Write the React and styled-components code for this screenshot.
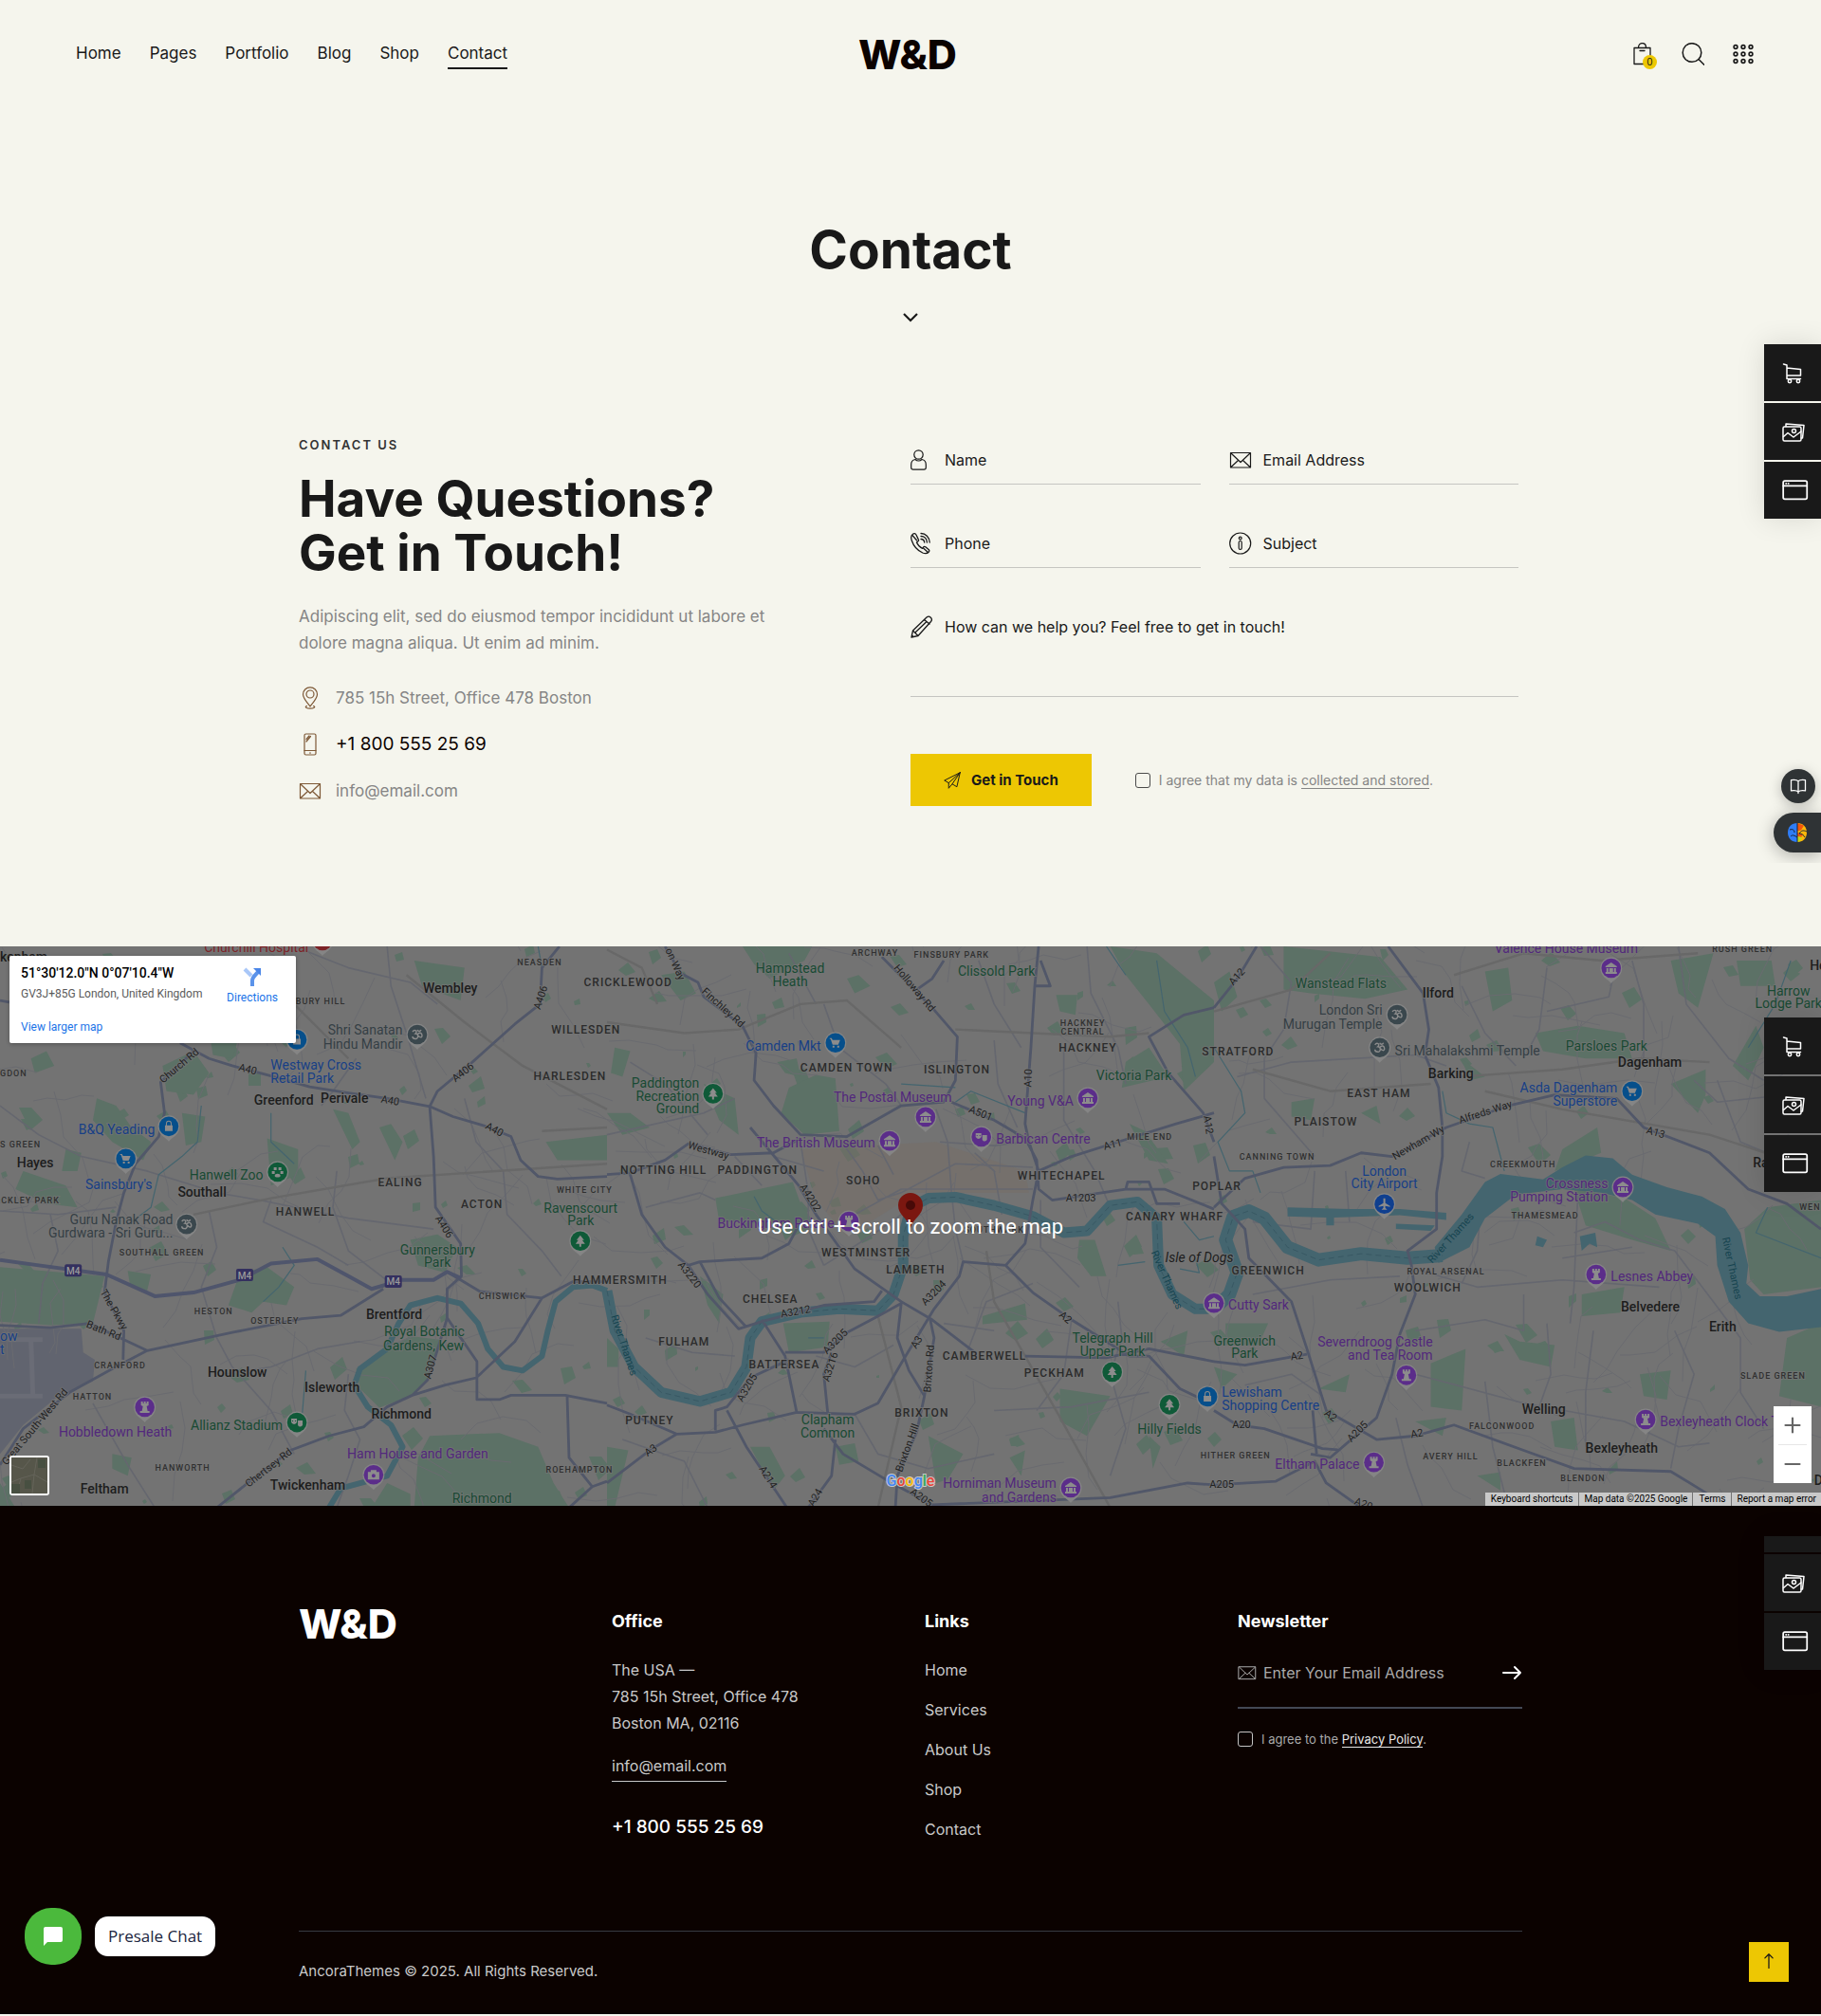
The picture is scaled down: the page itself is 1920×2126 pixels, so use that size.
import React from "react";
import styled, { createGlobalStyle, css } from "styled-components";

const GlobalStyle = createGlobalStyle`
  *, *::before, *::after { box-sizing: border-box; }
  body { margin: 0; background: #f5f5ed; color: #191919; font-family: Inter, "Open Sans", sans-serif; }
  h1, h2, h3, p, ul { margin: 0; padding: 0; }
  ul { list-style: none; }
  a { color: inherit; text-decoration: none; }
  button, input, textarea { font: inherit; color: inherit; margin: 0; padding: 0; border: 0; background: none; }
  button { cursor: pointer; }
  svg { display: block; flex: none; }
`;

/* ---------- icons ---------- */

const Stroke = ({ size = 24, w = 1.2, box = 24, children }) => (
  <svg width={size} height={size} viewBox={`0 0 ${box} ${box}`} fill="none" stroke="currentColor" strokeWidth={w} strokeLinecap="round" strokeLinejoin="round" aria-hidden="true">
    {children}
  </svg>
);
const BagIcon = () => (
  <Stroke><path d="M3 5.500h17v17H3zM7.500 5.300c0-6.300 8-6.300 8 0M9 8.500h5" strokeWidth="1.300" /></Stroke>
);
const SearchIcon = () => (
  <Stroke w={1.5}><circle cx="11" cy="10.500" r="9.800" /><path d="M18 17.500l6 6" /></Stroke>
);
const GridIcon = () => (
  <Stroke w={1.6}>
    {[4.5, 12, 19.5].map((y) => [4, 12, 20].map((x) => <circle key={`${x}-${y}`} cx={x} cy={y} r="1.900" />))}
  </Stroke>
);
const ChevronIcon = () => (
  <Stroke w={2.2}><path d="M5 8l7 7 7-7" strokeLinecap="butt" strokeLinejoin="miter" /></Stroke>
);
const PinIcon = () => (
  <Stroke><path d="M12 21C9 17 4.500 12.500 4.500 8.300a7.500 7.500 0 0 1 15 0C19.500 12.500 15 17 12 21z" /><circle cx="12" cy="8" r="4" /><path d="M8.500 20.500c-3 1 0 2.700 3.500 2.700s6.500-1.700 3.500-2.700" /></Stroke>
);
const MobileIcon = () => (
  <Stroke><rect x="6" y="1" width="12" height="22" rx="1.500" /><path d="M6 18.500h12M8 6.500L11 3M8 9l4.500-5.500M11.500 21h1" /></Stroke>
);
const MailIcon = ({ size }) => (
  <Stroke size={size}><path d="M1.500 4.500h21v15.500h-21zM2 5l10 9.500L22 5M2 19.500l7.500-7M22 19.500l-7.500-7" /></Stroke>
);
const UserIcon = () => (
  <Stroke><circle cx="8.500" cy="6.500" r="4.700" /><path d="M5 11.500c-3 .5-4.300 2.500-4.300 5.500v3c0 1.500.8 2.200 2.200 2.200h11.200c1.400 0 2.200-.7 2.200-2.200V17c0-3-1.300-5-4.300-5.500-2 2-5 2-7 0z" /></Stroke>
);
const PhoneIcon = () => (
  <Stroke w={1.3}><path d="M2.500 2.200C.7 3.500.3 6 1.300 9c2 6 6 10.500 11.500 13 2.500 1 5 .8 6.500-1 .8-1 .6-1.800-.2-2.500l-3.300-2.700c-.9-.6-1.700-.5-2.300.3l-1 1.300c-2.700-1.200-4.800-3.500-6-6.300l1.500-1.300c.7-.6.7-1.400.2-2.200L6 3C5 1.500 3.700 1.300 2.500 2.200zM2 3.500l4.500 5.200M14 17.500l4.500 4M11 1.500c5 0 9 4 9.200 9.500M11 4.500c3.700 0 6.200 2.700 6.400 6.500M11 7.500c2.300 0 3.500 1.500 3.700 3.500" /></Stroke>
);
const InfoIcon = () => (
  <Stroke><circle cx="11.700" cy="12" r="11" /><circle cx="11.700" cy="6.500" r="1.400" /><rect x="10.200" y="9.500" width="3" height="9" rx="1.400" /></Stroke>
);
const PencilIcon = () => (
  <Stroke w={1.3}><path d="M1 23l1.500-7L17 2c3-2.500 7 1.500 4.500 4.500L8 21.500zM2.500 16l5.500 5.500M14.500 4.500L20 9M5.500 17.500L17 6.500M1.500 21l1.500 1.500" /></Stroke>
);
const PlaneIcon = () => (
  <Stroke size={18} w={1.3}><path d="M23 1L1 12l6 3.500L23 1zM23 1l-4.500 20-6.500-4L23 1zM7 15.500V23l5-6" /></Stroke>
);
const ArrowIcon = ({ up }) => (
  <Stroke size={up ? 22 : 24} w={up ? 1.4 : 2}>
    {up ? <path d="M12 19V3M7.500 7.500L12 3l4.500 4.500" /> : <path d="M4 12h18M16 6l6 6-6 6" />}
  </Stroke>
);
const CartIcon = () => (
  <Stroke w={1.5}><path d="M1.500 3l3.500 1v14.500h14.500M5 7l14.500 1.500v6.500H5" /><circle cx="8" cy="21" r="1.700" /><circle cx="17" cy="21" r="1.700" /></Stroke>
);
const GalleryIcon = () => (
  <Stroke w={1.5}><rect x="1" y="7" width="19" height="15" rx="1.500" /><path d="M4 6.500V4L23 5.500l-1.500 13.500h-1.300M1.500 17.500l4.500-4 6 4.500 8-6" /><circle cx="12.500" cy="11.500" r="2" /></Stroke>
);
const WindowIcon = () => (
  <Stroke size={28} w={1.5}><rect x="1" y="3.500" width="21.500" height="16.500" rx="1.500" /><path d="M1 8h21.500M3.500 5.800h.2M5.600 5.800h.2" /></Stroke>
);
const BookIcon = () => (
  <Stroke size={18} w={1.7}><path d="M12 5C10 3 5 3 2 3.500v15c3-.5 8-.5 10 1.500 2-2 7-2 10-1.500v-15C19 3 14 3 12 5zM12 5v17" /></Stroke>
);
const BrainIcon = () => (
  <svg width="22" height="22" viewBox="0 0 22 22" aria-hidden="true">
    <path d="M11 1C5 1 1 5 1 11s4 10 10 10z" fill="#2f7df6" />
    <path d="M11 1c6 0 10 4 10 10s-4 10-10 10z" fill="#fbb80a" />
    <path d="M11 1l7 2.500-3 5-4 1zM11 11l6 2-2 3-4-1z" fill="#f0560c" />
    <path d="M11 15l5 1-2 4-3 1z" fill="#c4d916" />
    <path d="M11 1v20M3 8c3-1 5 0 5 3M4 15c2-2 4-1 7 1M13 12c2-3 4-4 8-2M13 12c3 0 5 2 6 4" stroke="#17243a" fill="none" />
  </svg>
);

/* ---------- shared pieces ---------- */

const Container = styled.div`
  max-width: 1290px;
  margin: 0 auto;
`;
const Logo = styled.a`
  font-size: 43px;
  line-height: 28px;
  font-weight: 800;
  color: ${(p) => (p.$light ? "#ffffff" : "#0b0200")};
`;
const Stack = styled.nav`
  position: absolute;
  right: 0;
  top: ${(p) => p.$top};
  display: flex;
  flex-direction: column;
  justify-content: flex-end;
  gap: 2px;
  z-index: 2;
  box-shadow: 0 0 30px rgba(0, 0, 0, 0.12);
  ${(p) => p.$clip && css`height: 141px; overflow: hidden;`}
`;
const StackLink = styled.a`
  display: flex;
  flex: none;
  align-items: center;
  width: 60px;
  height: 60px;
  padding-left: 19px;
  background: #191919;
  color: #ffffff;
`;
const SideStack = ({ top, clip }) => (
  <Stack $top={top} $clip={clip} aria-label="Quick links">
    <StackLink href="#buy" aria-label="Buy"><CartIcon /></StackLink>
    <StackLink href="#demos" aria-label="Demos"><GalleryIcon /></StackLink>
    <StackLink href="#site" aria-label="Site"><WindowIcon /></StackLink>
  </Stack>
);
const Check = styled.input.attrs({ type: "checkbox" })`
  appearance: none;
  flex: none;
  width: 16px;
  height: 16px;
  border: 1px solid ${(p) => (p.$light ? "#c4c4c4" : "#4a4a4a")};
  border-radius: 3px;
`;

/* ---------- header ---------- */

const Top = styled.div`
  position: relative;
  padding-bottom: 148px;
`;
const Header = styled.header`
  display: grid;
  grid-template-columns: 1fr auto 1fr;
  align-items: center;
  height: 114px;
  padding: 0 70px 0 64px;
`;
const Nav = styled.nav`
  display: flex;
  gap: 30px;
  padding-left: 16px;
`;
const NavLink = styled.a`
  padding: 5px 0 5px;
  border-bottom: 2px solid ${(p) => (p.$active ? "#191919" : "transparent")};
  font-size: 17px;
  line-height: 20px;
`;
const Tools = styled.div`
  display: flex;
  justify-content: flex-end;
  gap: 29px;
`;
const ToolButton = styled.button`
  position: relative;
  display: flex;
`;
const Badge = styled.span`
  position: absolute;
  right: -3px;
  bottom: -4px;
  width: 15px;
  height: 15px;
  border-radius: 50%;
  background: #edc703;
  font-size: 10px;
  line-height: 15px;
  text-align: center;
`;
const PageTitle = styled.h1`
  margin-top: 119px;
  font-size: 55px;
  line-height: 60px;
  font-weight: 700;
  text-align: center;
`;
const Down = styled.div`
  display: flex;
  justify-content: center;
  margin: 30px 0 112px;
`;

/* ---------- contact block ---------- */

const Columns = styled(Container)`
  display: grid;
  grid-template-columns: 1fr 1fr;
`;
const Eyebrow = styled.p`
  font-size: 13px;
  line-height: 20px;
  font-weight: 600;
  letter-spacing: 2px;
  color: #333333;
`;
const Heading = styled.h2`
  margin-top: 19px;
  font-size: 53px;
  line-height: 57px;
  font-weight: 700;
`;
const Lead = styled.p`
  max-width: 500px;
  margin-top: 24px;
  font-size: 17px;
  line-height: 28px;
  color: #858585;
`;
const ContactList = styled.ul`
  display: flex;
  flex-direction: column;
  gap: 21px;
  margin-top: 30px;
`;
const ContactItem = styled.li`
  display: flex;
  align-items: center;
  gap: 15px;
  font-size: ${(p) => (p.$strong ? "19px" : "17px")};
  line-height: 28px;
  color: ${(p) => (p.$strong ? "#0b0200" : "#858585")};
  svg { color: #7d5836; }
`;
const Form = styled.form`
  display: grid;
  grid-template-columns: 1fr 1fr;
  gap: 37px 30px;
  padding: 1px 4px 0 0;
  align-content: start;
`;
const Field = styled.label`
  display: flex;
  align-items: ${(p) => (p.$wide ? "flex-start" : "center")};
  grid-column: ${(p) => (p.$wide ? "1 / -1" : "auto")};
  gap: 12px;
  height: ${(p) => (p.$wide ? "99px" : "51px")};
  padding-top: ${(p) => (p.$wide ? "13px" : "0")};
  border-bottom: 1px solid #c5c5c1;
`;
const textBox = css`
  flex: 1;
  min-width: 0;
  outline: 0;
  font-size: 16px;
  line-height: 24px;
  &::placeholder { color: ${(p) => (p.$light ? "#aaaaaa" : "#191919")}; opacity: 1; }
`;
const TextInput = styled.input`${textBox}`;
const TextArea = styled.textarea`
  ${textBox}
  height: 80px;
  resize: none;
`;
const Submit = styled.div`
  grid-column: 1 / -1;
  display: flex;
  align-items: center;
  gap: 46px;
  margin-top: 23px;
`;
const SubmitButton = styled.button`
  display: flex;
  align-items: center;
  gap: 11px;
  height: 55px;
  padding: 0 35px;
  background: #edc703;
  font-size: 15px;
  font-weight: 700;
`;
const Agree = styled.label`
  display: flex;
  align-items: center;
  gap: 9px;
  font-size: ${(p) => (p.$light ? "13px" : "14px")};
  line-height: 20px;
  color: ${(p) => (p.$light ? "#aaaaaa" : "#858585")};
  a { border-bottom: 1px solid currentColor; ${(p) => p.$light && "color: #e8e8e8;"} }
`;
const Helpers = styled.div`
  position: absolute;
  right: 0;
  top: 790px;
  height: 120px;
  width: 80px;
  padding-top: 21px;
  display: flex;
  flex-direction: column;
  align-items: flex-end;
  gap: 10px;
  overflow: hidden;
`;
const Reader = styled.button`
  display: flex;
  align-items: center;
  justify-content: center;
  width: 36px;
  height: 36px;
  margin-right: 6px;
  border-radius: 50%;
  background: #2f3335;
  color: #ffffff;
  box-shadow: 0 3px 14px rgba(0, 0, 0, 0.25);
`;
const Assistant = styled.button`
  display: flex;
  align-items: center;
  width: 50px;
  height: 42px;
  padding-left: 14px;
  border-radius: 21px 0 0 21px;
  background: #2f3335;
  box-shadow: 0 3px 18px rgba(0, 0, 0, 0.3);
`;

/* ---------- map ---------- */

const MapSection = styled.section`
  position: relative;
  height: 590px;
  overflow: hidden;
  background: #737373;
  font-family: Roboto, sans-serif;
`;
const MapDrawing = styled.svg`
  width: 100%;
  height: 100%;
`;
const MapHint = styled.p`
  position: absolute;
  inset: 0;
  display: flex;
  align-items: center;
  justify-content: center;
  font-size: 22px;
  color: #ffffff;
`;
const MapCard = styled.div`
  position: absolute;
  left: 10px;
  top: 10px;
  display: flex;
  justify-content: space-between;
  width: 302px;
  height: 92px;
  padding: 8px 19px 0 12px;
  border-radius: 2px;
  background: #ffffff;
  box-shadow: 0 1px 4px rgba(0, 0, 0, 0.3);
  font-size: 12px;
  line-height: 16px;
  a { color: #1a73e8; }
`;
const CardTitle = styled.p`
  font-size: 14px;
  line-height: 20px;
  font-weight: 500;
  color: #000000;
`;
const CardAddress = styled.p`
  margin: 4px 0 19px;
  color: #5b5b5b;
`;
const Directions = styled.a`
  display: flex;
  flex-direction: column;
  align-items: center;
  gap: 3px;
  padding-top: 3px;
`;
const Satellite = styled.button`
  position: absolute;
  left: 10px;
  bottom: 11px;
  display: flex;
  width: 42px;
  height: 42px;
  border: 2px solid #ffffff;
  border-radius: 3px;
  overflow: hidden;
`;
const Zoom = styled.div`
  position: absolute;
  right: 10px;
  bottom: 24px;
  display: flex;
  flex-direction: column;
  width: 40px;
  padding: 0 5px;
  background: #ffffff;
  color: #666666;
`;
const ZoomButton = styled.button`
  display: flex;
  align-items: center;
  justify-content: center;
  height: 40px;
  & + & { border-top: 1px solid #e6e6e6; height: 41px; }
`;
const Credits = styled.div`
  position: absolute;
  right: 0;
  bottom: 0;
  display: flex;
  gap: 1px;
  font-size: 10px;
  line-height: 14px;
  color: #000000;
`;
const creditBox = css`
  padding: 0 5px 0 6px;
  background: #c9c9c9;
`;
const Credit = styled.a`${creditBox}`;
const CreditText = styled.span`${creditBox}`;

/* The map is charted in three sheets of 1568 x 1568 units, side by side. */
const SHEET = 1568;
const at = (sheet, x, y) => [sheet * 640 + (x * 640) / SHEET, (y * 600) / SHEET - 8];

const WATER = "#44656f";
const sheets = [
  {
    parks: "M920 1185L1000 1130 1060 1095 1135 1105 1110 1210 1060 1260 980 1292 930 1240zM1080 1430L1110 1370 1290 1362 1390 1400 1430 1500 1470 1568 1070 1568zM0 905L270 930 240 1060 130 1065 0 1055zM330 915L390 925 380 970 335 950zM620 920L690 905 760 960 740 1010 680 1000 650 1030 590 1010zM1060 830L1130 815 1180 850 1150 920 1080 900zM420 350L500 310 540 370 500 430 430 420zM250 440L300 460 340 520 390 560 370 610 290 560 240 500zM470 480L530 490 520 560 480 570zM170 580L210 590 200 640 160 640zM690 550L770 580 770 650 700 680zM1070 60L1200 80 1190 170 1090 130zM80 330L120 310 140 350 90 370zM1410 560L1568 540 1568 610 1440 610zM540 250L620 260 600 330 550 320zM0 1170L20 1180 0 1250zM290 1420L340 1430 330 1480 290 1460zM60 640L170 680 200 740 120 730 40 690zM860 470L900 480 930 560 910 580zM980 520L1010 510 1040 560 1020 610zM0 1500L40 1568 0 1568zM1000 1500L1060 1530 1060 1568 960 1568zM700 260L760 250 740 300z",
    river: "M850 1568L880 1515 1000 1480 1040 1400 1010 1340 950 1290 915 1230 930 1185 1000 1130 1030 1060 1060 1010 1130 990 1190 1005 1235 1060 1260 1130 1300 1180 1350 1190 1400 1150 1415 1080 1435 1000 1480 960 1530 955 1568 970",
    width: 6,
    streams: "M520 460L510 560 470 600 410 650 390 740 340 780M730 850L760 900 720 960 680 1000M700 480L700 560 760 620M1390 21L1400 80M790 1190L780 1320",
    roads: "M465 287L540 330 600 350 700 378 800 408 900 425 1000 440 1110 462 1170 490 1250 515 1320 545 1345 610 1390 655 1440 662 1568 655M500 310L415 395 425 480 410 545 350 620 320 700 300 780 280 890 270 975 320 1080 318 1160M1445 21L1400 80 1395 180 1330 235 1220 340 1130 420 1110 462 1120 600 1125 740 1190 840 1192 930 1155 965 1155 1045 1125 1150 1105 1215 1065 1258M1568 945L1480 945 1400 990 1330 1110 1230 1210 1150 1230 1065 1258 1000 1290 940 1345 850 1370 750 1410 640 1500 560 1568M0 1450L60 1350 180 1250 290 1185 380 1135 600 1085 780 1047 880 1038 990 965M0 1065L130 1072 230 1060 320 1105 380 1135M1155 1045L1232 1165 1232 1270 1290 1270 1320 1258 1460 1258 1568 1280M1465 1258L1470 1430 1530 1510M1470 1568L1530 1510 1568 1495M1155 918L1240 972 1400 990M0 170L24 175",
    motorway: "M0 885L100 900 275 925 400 985 500 975 620 940 700 895 820 883 900 930 960 965 1040 940 1120 940 1155 918 1190 935",
    rails: "M1050 100L1200 230 1350 350 1568 470M1400 530L1568 520M500 760L700 715 1000 660 1568 620M640 60L760 180 900 330",
    minor: "M0 460L100 540 210 600 380 640 560 700 670 720 900 770 1120 800M760 21L900 80 1060 120 1130 180M540 750L560 850 520 960 560 1100 600 1180 700 1300 760 1420M870 640L860 740 900 860 1010 950M100 1060L110 950 150 860 130 760M700 720L680 780 820 850 900 900M1200 440L1230 560 1300 640 1310 760 1400 860 1450 930M1000 21L1010 130 1050 260 1100 440M240 1280L330 1450 400 1568M580 1200L700 1180 820 1130 930 1110M920 330L860 420 830 460M0 750L150 760 300 740M900 1200L890 1300 930 1380 900 1480 870 1568",
  },
  {
    parks: "M450 480L470 410 540 375 590 385 600 530 510 540zM280 715L480 670 500 730 540 790 480 820 370 780 290 780zM455 1060L575 1055 570 1125 470 1140zM350 21L530 21 510 60 420 110 380 70zM1340 340L1400 300 1450 380 1330 410zM1300 21L1420 40 1568 170 1568 340 1490 420 1480 290 1400 180 1340 100zM0 1400L55 1410 20 1568 0 1568zM830 1370L920 1420 880 1490 850 1500zM970 1040L1080 1005 1085 1050 970 1062zM0 480L60 480 110 520 40 540zM250 400L330 440 340 540 290 500zM1160 155L1215 155 1210 210 1170 200zM620 110L650 100 680 130 640 150zM1220 830L1260 830 1290 930 1250 930 1215 880zM1350 510L1390 530 1450 620 1400 610zM1170 1240L1300 1260 1240 1370 1170 1330zM370 1400L420 1400 460 1480 430 1520zM0 1100L30 1130 30 1180 0 1180zM590 1400L640 1390 650 1440 600 1450zM240 930L300 980 290 1060 260 1010zM140 100L200 90 230 150 190 170zM20 300L60 310 40 380 10 370zM1430 1110L1500 1080 1490 1150zM440 340L490 330 500 380 460 370zM1040 1430L1080 1410 1070 1480zM1400 1370L1430 1400 1410 1460z",
    river: "M0 970L20 1080 70 1180 140 1250 240 1275 320 1250 360 1180 370 1100 400 1055 500 1030 600 1020 700 1025 740 980 765 900 765 820 785 740 830 715 900 712 1000 735 1100 765 1180 810 1240 805 1300 735 1370 725 1420 770 1425 900 1460 980 1520 1020 1568 1020",
    width: 11,
    streams: "M380 710L400 750 450 790M760 400L900 410M900 450L940 420 1080 480M1420 60L1440 200 1500 300 1520 380M1290 21L1340 100M1490 780L1530 830 1568 820M1320 900L1390 890M1480 910L1530 920 1520 880M520 1100L560 1100",
    roads: "M150 21L190 95 235 120 250 160 350 240 385 315 380 390 430 460 500 540 620 545 760 460 870 450 900 390 905 270 840 190 710 50M370 520L495 680 540 760 600 850 640 910 760 1000 840 1050 950 1140M0 650L60 645 150 610 210 565 320 595 430 590 500 550M890 450L1000 500 1080 550 1110 610 1115 690 1150 720 1340 690 1440 690 1568 745M1115 21L1105 130 1095 300 1080 510 1090 560 1115 640 1100 720 1080 840 1030 900 920 890 910 930 845 1020 760 1170 700 1280 640 1310 490 1305 350 1340 280 1360 180 1365 60 1310 0 1285M1115 640L1200 600 1320 560 1470 510 1568 480M1568 190L1490 210 1400 270 1450 370 1540 480 1568 560M1030 900L1100 975 1200 1050 1350 1150 1400 1150 1480 1240 1568 1285M1080 1150L1290 1155 1400 1130 1568 1165M60 650L90 760 150 850 210 900 240 890 400 880 470 840 500 780M210 900L260 980 340 1075 400 1055 560 1010 690 1000 710 970M240 890L290 990 360 1070M400 1050L460 1150 490 1305M460 1140L560 1140 620 1085 700 1040 760 1005 750 1100 780 1190 820 1260 800 1360 750 1480 745 1568M570 1305L560 1200 580 1140M0 1500L110 1410 180 1365M310 1300L360 1400 465 1568M280 1355L280 1300 310 1290 370 1210 470 1160M590 1380L580 1480 520 1568M560 1350L610 1420 720 1490 840 1560 1300 1540 1500 1500 1568 1505M835 1050L845 1100 820 1260M870 60L840 110 800 140M1120 60L1145 130 1105 130M1340 690L1345 670 1400 670 1420 730 1480 730",
    rails: "M0 230L200 260 340 250 500 180 620 170 760 300M0 30L90 80 130 180M900 250L1100 260 1300 270 1400 260M980 860L1000 1000 1160 1300 1300 1568M700 1040L760 1290 700 1568",
    minor: "M0 540L250 480 330 440M560 180L600 300 720 400 760 460M500 560L520 700 520 800 560 900M600 550L660 640 700 720 760 700 900 620 1100 630M850 470L880 560 890 700 900 800 920 890M950 590L1000 640 1020 760M700 570L740 650M640 760L760 690 960 690 1100 690M560 900L680 820 760 760M330 600L400 680M100 740L240 700 280 720M860 560L1000 570 1080 560M1180 300L1180 500 1260 640 1300 740M1000 280L1010 400 1060 520M930 1140L980 1000 1100 950M1200 1050L1180 1200 1110 1300M640 1310L700 1420 830 1460 1000 1420M1320 1000L1330 1100 1300 1200 1340 1350 1300 1480M100 1100L220 1140 330 1150M40 1380L200 1440 260 1568M1240 21L1250 150 1320 300 1340 400M960 60L1000 180 1070 300M430 600L560 640M470 40L540 180M1120 720L1120 850 1220 960M870 1060L1000 1080M1000 1300L1200 1290 1400 1250M260 540L150 400 60 340M540 1150L640 1180 740 1120",
  },
  {
    parks: "M180 21L430 50 500 140 390 165 250 150 180 140zM1370 800L1430 740 1568 720 1568 960 1420 980 1385 940zM1480 1100L1568 1060 1568 1290 1460 1260zM950 980L1060 960 1050 1030 950 1040zM560 1170L650 1130 640 1300 560 1290zM930 690L1060 715 1140 770 1180 860 1080 830 960 790zM1180 60L1290 40 1250 190 1200 150zM30 1060L140 1060 115 1120 30 1120zM870 1330L930 1320 940 1410 880 1400zM1180 400L1270 360 1270 430 1250 480zM900 580L990 520 1000 590 930 620 880 640zM1350 60L1440 60 1450 130 1360 130zM750 1090L790 1110 880 1120 870 1180 790 1160zM0 1180L60 1200 20 1240zM200 450L260 440 250 500 200 490zM700 90L760 80 770 170 720 200zM640 330L700 380 660 390zM1400 240L1420 300 1380 390 1340 350zM1100 1200L1180 1190 1170 1270 1110 1260zM520 1330L600 1320 590 1370zM0 120L40 90 60 160 20 200zM380 480L420 460 430 510zM830 260L940 240 1060 260 1080 330 960 330 850 310zM680 1480L740 1470 740 1520zM270 1240L350 1200 340 1250z",
    river: "M0 1020L40 980 60 920 30 830 50 765 90 750 130 770 190 850 270 885 380 868 500 880 590 873",
    width: 14,
    estuary: "M570 850L640 760 700 670 740 648 850 663 900 630 960 597 1030 605 1080 650 1170 685 1260 710 1320 745 1360 810 1380 900 1375 950 1410 985 1480 985 1568 965 1568 1070 1460 1083 1380 1060 1330 1000 1300 900 1295 820 1250 785 1140 760 1080 720 1000 700 900 690 780 705 700 770 660 850 580 893zM190 740L350 745 480 745 600 755 600 775 480 762 310 768 310 790 290 790 290 768 190 765zM470 785L570 790 560 805 470 800zM945 820L985 810 990 850 970 840 950 860zM835 820L860 830 850 850 830 845z",
    streams: "M590 420L600 480 660 510 720 520 750 640M0 300L70 420 80 480 10 560 40 640 100 640 120 700M1430 740L1400 810 1568 880M1490 60L1450 180 1380 300",
    roads: "M110 21L60 110 0 190M450 21L540 150 555 250 545 320 580 410 590 520 590 600 575 700 575 800 500 860 510 900 520 980 480 1090 460 1200 420 1320 300 1430 250 1420M0 740L80 660 180 630 300 625 380 590 460 600 600 520 760 460 880 430 1040 440 1110 520 1280 590 1380 690 1480 730 1568 800M0 600L20 730 80 800 90 880 200 1000 240 1130 290 1300 420 1380 520 1370 620 1340 800 1410 930 1460 1180 1468 1260 1520 1330 1568M0 1300L60 1340 130 1350 280 1405 320 1408M0 1505L160 1495 260 1440 290 1500 380 1568M255 1300L265 1420M0 1165L80 1175 240 1145",
    rails: "M620 100L800 40 1000 60 1250 40M640 380L900 360 1100 330 1280 340M700 420L900 470 1280 540 1568 640M100 360L300 420 560 400M0 200L200 140 300 40",
    minor: "M930 810L1010 780 1100 830 1190 860 1290 1000 1360 1100 1360 1250 1420 1350M640 130L700 260 780 350M860 80L840 250 800 330M1110 330L1110 180 1080 60M1200 21L1220 180 1330 330 1420 390M600 350L520 320 200 340 60 380M120 21L200 120 180 250 130 330 130 440 260 600M260 640L250 800 100 780M340 640L350 780M690 720L680 860 640 950M940 700L930 960 920 1060M100 980L300 940 480 930M520 910L680 960 900 940 1150 960M520 1200L800 1280 1060 1330 1200 1400 1280 1390M860 1060L870 1200 840 1290M800 980L800 1080 700 1050 520 1080M700 1220L720 1400 760 1568M1190 1080L1240 1200 1200 1350 1180 1460M470 1320L500 1450 540 1568M1040 60L1020 160 860 200M1240 390L1300 450 1568 420M80 1230L200 1200 280 1260M660 560L640 640 700 660M900 880L1080 850M1300 390L1360 560 1450 600M980 1080L960 1250 960 1400",
  },
];

/* Side streets: a fixed scatter of short bent lines over the whole chart. */
const sideStreets = (() => {
  let seed = 7;
  const next = () => ((seed = (seed * 16807) % 2147483647) / 2147483647);
  let d = "";
  for (let i = 0; i < 300; i += 1) {
    let x = next() * 1920;
    let y = next() * 590;
    let a = next() * 6.28;
    d += `M${x.toFixed(0)} ${y.toFixed(0)}`;
    for (let k = 0; k < 4; k += 1) {
      a += (next() - 0.5) * 1.1;
      x += Math.cos(a) * (10 + next() * 22);
      y += Math.sin(a) * (10 + next() * 22);
      d += `L${x.toFixed(0)} ${y.toFixed(0)}`;
    }
  }
  return d;
})();
const greens = (() => {
  let seed = 91;
  const next = () => ((seed = (seed * 16807) % 2147483647) / 2147483647);
  let d = "";
  for (let i = 0; i < 230; i += 1) {
    const x = next() * 1920;
    const y = next() * 590;
    const s = 3 + next() * 10;
    d += `M${x.toFixed(0)} ${y.toFixed(0)}l${s.toFixed(0)} ${(-s * next()).toFixed(0)} ${(s * next()).toFixed(0)} ${s.toFixed(0)} ${(-s).toFixed(0)} ${(s * next()).toFixed(0)}z`;
  }
  return d;
})();

const kinds = {
  town: { size: 14, weight: 500, fill: "#1d1d1d" },
  area: { size: 12, weight: 500, fill: "#2b2b2b", spacing: 1 },
  small: { size: 9, weight: 500, fill: "#303030", spacing: 1 },
  park: { size: 14, weight: 400, fill: "#184a33" },
  sight: { size: 14, weight: 400, fill: "#52287c" },
  shop: { size: 14, weight: 400, fill: "#173f86" },
  faith: { size: 14, weight: 400, fill: "#353f45" },
  health: { size: 14, weight: 400, fill: "#7c2327" },
  road: { size: 11, weight: 400, fill: "#222222" },
  water: { size: 11, weight: 400, fill: "#17444f" },
  isle: { size: 14, weight: 400, fill: "#1d1d1d", italic: true },
};

/* sheet, x, y of the centre line, text, kind, anchor, turn */
const labels = [
  [0, 0, 50, "kenham", "town", "start"],
  [0, 662, 24, "Churchill Hospital", "health"],
  [0, 1394, 66, "NEASDEN", "small"],
  [0, 1163, 136, "Wembley", "town"],
  [0, 764, 173, "BURY HILL", "small", "start"],
  [0, 1040, 252, "Shri Sanatan", "faith", "end"],
  [0, 1040, 289, "Hindu Mandir", "faith", "end"],
  [0, 699, 347, "Westway Cross", "shop", "start"],
  [0, 699, 383, "Retail Park", "shop", "start"],
  [0, 733, 445, "Greenford", "town"],
  [0, 890, 440, "Perivale", "town"],
  [0, 1424, 251, "WILLESDEN", "area", "start"],
  [0, 1378, 380, "HARLESDEN", "area", "start"],
  [0, 0, 372, "GDON", "small", "start"],
  [0, 400, 524, "B&Q Yeading", "shop", "end"],
  [0, 0, 566, "S GREEN", "small", "start"],
  [0, 91, 618, "Hayes", "town"],
  [0, 307, 676, "Sainsbury's", "shop"],
  [0, 154, 720, "OCKLEY PARK", "small", "end"],
  [0, 680, 650, "Hanwell Zoo", "park", "end"],
  [0, 522, 698, "Southall", "town"],
  [0, 1034, 672, "EALING", "area"],
  [0, 789, 753, "HANWELL", "area"],
  [0, 1245, 732, "ACTON", "area"],
  [0, 1438, 693, "WHITE CITY", "small", "start"],
  [0, 1500, 741, "Ravenscourt", "park"],
  [0, 1500, 777, "Park", "park"],
  [0, 447, 774, "Guru Nanak Road", "faith", "end"],
  [0, 447, 811, "Gurdwara - Sri Guru...", "faith", "end"],
  [0, 418, 866, "SOUTHALL GREEN", "small"],
  [0, 1130, 856, "Gunnersbury", "park"],
  [0, 1130, 892, "Park", "park"],
  [0, 1298, 986, "CHISWICK", "small"],
  [0, 552, 1028, "HESTON", "small"],
  [0, 710, 1054, "OSTERLEY", "small"],
  [0, 1018, 1035, "Brentford", "town"],
  [0, 1096, 1083, "Royal Botanic", "park"],
  [0, 1094, 1120, "Gardens, Kew", "park"],
  [0, 0, 1094, "ow", "shop", "start"],
  [0, 0, 1131, "t", "shop", "start"],
  [0, 310, 1177, "CRANFORD", "small"],
  [0, 613, 1195, "Hounslow", "town"],
  [0, 858, 1237, "Isleworth", "town"],
  [0, 239, 1261, "HATTON", "small"],
  [0, 1037, 1308, "Richmond", "town"],
  [0, 298, 1360, "Hobbledown Heath", "sight"],
  [0, 730, 1340, "Allianz Stadium", "park", "end"],
  [0, 1079, 1420, "Ham House and Garden", "sight"],
  [0, 472, 1459, "HANWORTH", "small"],
  [0, 270, 1517, "Feltham", "town"],
  [0, 795, 1504, "Twickenham", "town"],
  [0, 1410, 1464, "ROEHAMPTON", "small", "start"],
  [0, 1245, 1543, "Richmond", "park"],
  [0, 463, 350, "Church Rd", "road", "middle", -40],
  [0, 640, 360, "A40", "road", "middle", 14],
  [0, 1008, 446, "A40", "road", "middle", 10],
  [0, 1277, 526, "A40", "road", "middle", 28],
  [0, 1397, 162, "A406", "road", "middle", -72],
  [0, 1196, 368, "A406", "road", "middle", -38],
  [0, 1147, 794, "A406", "road", "middle", 58],
  [0, 294, 1022, "The Pkwy", "road", "middle", 60],
  [0, 268, 1080, "Bath Rd", "road", "middle", 22],
  [0, 90, 1345, "Great South-West Rd", "road", "middle", -50],
  [0, 694, 1458, "Chertsey Rd", "road", "middle", -38],
  [0, 1112, 1180, "A307", "road", "middle", -75],
  [1, -60, 121, "CRICKLEWOOD", "area", "start"],
  [1, 473, 80, "Hampstead", "park"],
  [1, 473, 117, "Heath", "park"],
  [1, 692, 40, "ARCHWAY", "small"],
  [1, 890, 45, "FINSBURY PARK", "small"],
  [1, 1006, 88, "Clissold Park", "park"],
  [1, 1229, 233, "HACKNEY", "small"],
  [1, 1229, 257, "CENTRAL", "small"],
  [1, 1242, 301, "HACKNEY", "area"],
  [1, 553, 294, "Camden Mkt", "shop", "end"],
  [1, 619, 356, "CAMDEN TOWN", "area"],
  [1, 904, 361, "ISLINGTON", "area"],
  [1, 1361, 376, "Victoria Park", "park"],
  [1, 1537, 312, "STRATFORD", "area", "start"],
  [1, 238, 396, "Paddington", "park", "end"],
  [1, 238, 433, "Recreation", "park", "end"],
  [1, 238, 469, "Ground", "park", "end"],
  [1, 738, 436, "The Postal Museum", "sight"],
  [1, 1205, 446, "Young V&A", "sight", "end"],
  [1, 693, 563, "The British Museum", "sight", "end"],
  [1, 1005, 552, "Barbican Centre", "sight", "start"],
  [1, 1402, 547, "MILE END", "small"],
  [1, 146, 638, "NOTTING HILL", "area"],
  [1, 389, 638, "PADDINGTON", "area"],
  [1, 662, 667, "SOHO", "area"],
  [1, 1174, 654, "WHITECHAPEL", "area"],
  [1, 1512, 683, "POPLAR", "area", "start"],
  [1, 1340, 767, "CANARY WHARF", "area", "start"],
  [1, 587, 785, "Buckingham Palace", "sight", "end"],
  [1, 1000, 802, "SOUTHWARK", "small"],
  [1, 669, 865, "WESTMINSTER", "area"],
  [1, 797, 912, "LAMBETH", "area"],
  [1, -88, 941, "HAMMERSMITH", "area", "start"],
  [1, 422, 994, "CHELSEA", "area"],
  [1, 199, 1111, "FULHAM", "area"],
  [1, 458, 1174, "BATTERSEA", "area"],
  [1, 975, 1150, "CAMBERWELL", "area"],
  [1, 1156, 1197, "PECKHAM", "area"],
  [1, 1306, 1101, "Telegraph Hill", "park"],
  [1, 1306, 1138, "Upper Park", "park"],
  [1, 813, 1307, "BRIXTON", "area"],
  [1, 110, 1328, "PUTNEY", "area"],
  [1, 570, 1326, "Clapham", "park"],
  [1, 570, 1362, "Common", "park"],
  [1, 1453, 1352, "Hilly Fields", "park"],
  [1, 1161, 1501, "Horniman Museum", "sight", "end"],
  [1, 1161, 1538, "and Gardens", "sight", "end"],
  [1, 1533, 1425, "HITHER GREEN", "small", "start"],
  [1, 176, 70, "on Way", "road", "middle", 66],
  [1, 300, 190, "Finchley Rd", "road", "middle", 42],
  [1, 794, 136, "Holloway Rd", "road", "middle", 50],
  [1, 1088, 384, "A10", "road", "middle", -88],
  [1, 965, 481, "A501", "road", "middle", 22],
  [1, 262, 584, "Westway", "road", "middle", 16],
  [1, 1306, 567, "A11", "road", "middle", -14],
  [1, 1224, 716, "A1203", "road"],
  [1, 1553, 513, "A12", "road", "middle", 82],
  [1, 525, 714, "A4202", "road", "middle", 58],
  [1, 213, 926, "A3220", "road", "middle", 52],
  [1, 844, 976, "A3204", "road", "middle", -45],
  [1, 487, 1028, "A3212", "road", "middle", -10],
  [1, 590, 1110, "A3205", "road", "middle", -45],
  [1, 577, 1180, "A3216", "road", "middle", -72],
  [1, 362, 1237, "A3205", "road", "middle", -60],
  [1, 800, 1112, "A3", "road", "middle", -58],
  [1, 832, 1185, "Brixton Rd", "road", "middle", -86],
  [1, 776, 1403, "Brixton Hill", "road", "middle", -70],
  [1, 1184, 1044, "A2", "road", "middle", 40],
  [1, 113, 1410, "A3", "road", "middle", -35],
  [1, 416, 1484, "A214", "road", "middle", 58],
  [1, 538, 1540, "A24", "road", "middle", -60],
  [1, 812, 1540, "A205", "road", "middle", 36],
  [1, 1442, 878, "Isle of Dogs", "isle", "start"],
  [1, 44, 1120, "River Thames", "water", "middle", 72],
  [1, 1446, 940, "River Thames", "water", "middle", 66],
  [2, 328, 122, "Wanstead Flats", "park"],
  [2, 579, 148, "Ilford", "town"],
  [2, 910, 26, "Valence House Museum", "sight"],
  [2, 1365, 30, "RUSH GREEN", "small"],
  [2, 1539, 72, "Ho", "town", "start"],
  [2, 1484, 143, "Harrow", "park"],
  [2, 1484, 179, "Lodge Park", "park"],
  [2, 435, 197, "London Sri", "faith", "end"],
  [2, 435, 234, "Murugan Temple", "faith", "end"],
  [2, 467, 308, "Sri Mahalakshmi Temple", "faith", "start"],
  [2, 1014, 296, "Parsloes Park", "park"],
  [2, 1126, 341, "Dagenham", "town"],
  [2, 612, 372, "Barking", "town"],
  [2, 1042, 409, "Asda Dagenham", "shop", "end"],
  [2, 1042, 446, "Superstore", "shop", "end"],
  [2, 426, 427, "EAST HAM", "area"],
  [2, 289, 505, "PLAISTOW", "area"],
  [2, 163, 602, "CANNING TOWN", "small"],
  [2, 440, 639, "London", "shop"],
  [2, 440, 675, "City Airport", "shop"],
  [2, 798, 623, "CREEKMOUTH", "small"],
  [2, 1018, 673, "Crossness", "sight", "end"],
  [2, 1018, 710, "Pumping Station", "sight", "end"],
  [2, 855, 764, "THAMESMEAD", "small"],
  [2, 1392, 618, "Ra", "town", "start"],
  [2, 1512, 740, "WEN", "small", "start"],
  [2, 140, 915, "GREENWICH", "area"],
  [2, 599, 916, "ROYAL ARSENAL", "small"],
  [2, 552, 962, "WOOLWICH", "area"],
  [2, 1025, 931, "Lesnes Abbey", "sight", "start"],
  [2, 37, 1010, "Cutty Sark", "sight", "start"],
  [2, 1127, 1015, "Belvedere", "town"],
  [2, 1314, 1070, "Erith", "town"],
  [2, 79, 1107, "Greenwich", "park"],
  [2, 79, 1143, "Park", "park"],
  [2, 565, 1110, "Severndroog Castle", "sight", "end"],
  [2, 565, 1146, "and Tea Room", "sight", "end"],
  [2, 1444, 1206, "SLADE GREEN", "small"],
  [2, 20, 1250, "Lewisham", "shop", "start"],
  [2, 20, 1287, "Shopping Centre", "shop", "start"],
  [2, 852, 1295, "Welling", "town"],
  [2, 744, 1342, "FALCONWOOD", "small"],
  [2, 1152, 1331, "Bexleyheath Clock T", "sight", "start"],
  [2, 1053, 1404, "Bexleyheath", "town"],
  [2, 376, 1449, "Eltham Palace", "sight", "end"],
  [2, 611, 1428, "AVERY HILL", "small"],
  [2, 795, 1446, "BLACKFEN", "small"],
  [2, 953, 1486, "BLENDON", "small"],
  [2, 1550, 1492, "D", "town", "start"],
  [2, 59, 105, "A12", "road", "middle", -48],
  [2, 701, 478, "Alfreds Way", "road", "middle", -18],
  [2, 528, 562, "Newham Wy", "road", "middle", -30],
  [2, 1141, 534, "A13", "road", "middle", 16],
  [2, 214, 1150, "A2", "road", "middle", -8],
  [2, 301, 1314, "A2", "road", "middle", 36],
  [2, 71, 1340, "A20", "road"],
  [2, 524, 1364, "A2", "road", "middle", -10],
  [2, 371, 1358, "A205", "road", "middle", -45],
  [2, 20, 1505, "A205", "road"],
  [2, 386, 1558, "A20", "road", "middle", 20],
  [2, 612, 825, "River Thames", "water", "middle", -48],
  [2, 1338, 908, "River Thames", "water", "middle", 78],
];

const pinTint = { park: "#0f5a38", sight: "#5b2d8a", shop: "#064f8b", faith: "#3a474d", health: "#7c2327", air: "#0f3f8f" };
const glyphs = {
  tree: "M0-6L4-1H2L5 3H1V6H-1V3H-5L-2-1H-4z",
  museum: "M-6-2L0-6 6-2V-1H-6zM-5 0H-3V4H-5zM3 0H5V4H3zM-2 0H2V4H-2zM-6 4H6V6H-6z",
  tower: "M-4-6H-2V-4H-1V-6H1V-4H2V-6H4V-2L2-1 3 4H5V6H-5V4H-3L-2-1-4-2z",
  bag: "M-4-1H-3V-3A3 3 0 0 1 3-3V-1H4V5H-4zM-2-1H2V-3A2 2 0 0 0-2-3z",
  cart: "M-6-5H-4L-3-3H5L3 2H-3L-5-4H-6zM-3 3H-1V5H-3zM2 3H4V5H2z",
  paw: "M-3 4C-3 1 3 1 3 4 3 6-3 6-3 4zM-6-1h3v3h-3zM3-1h3v3H3zM-4-5h3v3h-3zM1-5h3v3H1z",
  camera: "M-6-3H-3V-5H3V-3H6V5H-6zM0-1A2 2 0 1 0 0 3 2 2 0 1 0 0-1z",
  masks: "M-6-4H0V0Q-3 4-6 0zM1-2H6V3Q3 6 1 3zM-5-2H-4V-1H-5zM-2-2H-1V-1H-2z",
  plane: "M-1-6H1V-1L6 2V3L1 2V4L3 6H-3L-1 4V2L-6 3V2L-1-1z",
};
const pins = [
  [0, 833, 5, "health", "museum"], [0, 767, 278, "shop", "bag"], [0, 1078, 264, "faith", "om"],
  [0, 436, 517, "shop", "bag"], [0, 325, 606, "shop", "cart"], [0, 717, 643, "park", "paw"],
  [0, 482, 787, "faith", "om"], [0, 1499, 833, "park", "tree"], [0, 374, 1291, "sight", "tower"],
  [0, 767, 1333, "park", "masks"], [0, 965, 1477, "sight", "camera"],
  [1, 590, 287, "shop", "cart"], [1, 274, 427, "park", "tree"], [1, 823, 491, "sight", "museum"],
  [1, 1242, 439, "sight", "museum"], [1, 730, 557, "sight", "museum"], [1, 967, 546, "sight", "masks"],
  [1, 625, 779, "sight", "tower"], [1, 1568, 1004, "sight", "museum"], [1, 1305, 1194, "park", "tree"],
  [1, 1453, 1284, "park", "tree"], [1, 1551, 1262, "shop", "bag"], [1, 1198, 1513, "sight", "museum"],
  [2, 1026, 81, "sight", "museum"], [2, 473, 209, "faith", "om"], [2, 428, 300, "faith", "om"],
  [2, 1080, 420, "shop", "cart"], [2, 440, 731, "air", "plane"], [2, 1056, 685, "sight", "museum"],
  [2, 987, 925, "sight", "tower"], [2, 497, 1203, "sight", "tower"], [2, 1115, 1325, "sight", "tower"],
  [2, 413, 1443, "sight", "tower"],
];
const shields = [[0, 189, 915], [0, 632, 928], [0, 1016, 946]];

const SheetLayer = ({ index, children }) => (
  <g transform={`translate(${index * 640} -8) scale(${640 / SHEET} ${600 / SHEET})`}>{children}</g>
);
const Line = ({ d, color, width, dash }) => (
  <path d={d} fill="none" stroke={color} strokeWidth={width} strokeLinejoin="round" strokeDasharray={dash} vectorEffect="non-scaling-stroke" />
);

const LondonMap = () => (
  <MapDrawing viewBox="0 0 1920 590" preserveAspectRatio="xMidYMid slice" role="img" aria-label="Map of London">
    <path d={greens} fill="#5c7166" />
    {sheets.map((s, i) => (
      <SheetLayer key={i} index={i}>
        <path d={s.parks} fill="#5c7166" />
        {i === 0 && <path d="M0 1075L210 1075 215 1140 245 1160 240 1220 150 1260 60 1340 0 1420z" fill="#61646f" />}
        {i === 0 && <Line d="M20 1105L110 1105M80 1105L85 1260M0 1260L110 1260" color="#6a6c76" width={5} />}
        {i === 1 && <path d="M500 580L850 560 1080 640 1090 700 800 700 620 820 540 720z" fill="#786e66" opacity=".5" />}
      </SheetLayer>
    ))}
    <path d={sideStreets} fill="none" stroke="#6a6b70" strokeWidth="1" />
    {sheets.map((s, i) => (
      <SheetLayer key={i} index={i}>
        <Line d={s.minor} color="#65676f" width={1.6} />
        <Line d={s.rails} color="#686868" width={2.4} />
        <Line d={s.streams} color={WATER} width={1.2} />
        <Line d={s.river} color={WATER} width={s.width} />
        {s.estuary && <path d={s.estuary} fill={WATER} />}
        {i > 0 && <Line d={s.river} color="#35545f" width={0.8} dash="6 4" />}
        <Line d={s.roads} color="#515769" width={2.8} />
        {s.motorway && <Line d={s.motorway} color="#4f556c" width={4} />}
      </SheetLayer>
    ))}
    {pins.map(([s, x, y, tint, glyph]) => {
      const [px, py] = at(s, x, y);
      return (
        <g key={`${px}-${py}`} transform={`translate(${px} ${py})`}>
          <path d="M0 16C-3 12-11.500 9-11.500 0A11.500 11.500 0 0 1 11.500 0C11.500 9 3 12 0 16z" fill="#858585" />
          <circle r="10.300" fill={pinTint[tint]} />
          {glyph === "om" ? (
            <path d="M-5-3C-3-6 1-4-2-1 2-1 1 5-2 4.500-4 4.500-5 3-5 2M0 0C2-3 5-2 5 1S2 3 1 1M0-5C1-3 3-3 4-5" fill="none" stroke="#8c8c8c" strokeWidth="1.400" />
          ) : (
            <path d={glyphs[glyph]} fill="#8c8c8c" fillRule="evenodd" />
          )}
        </g>
      );
    })}
    {shields.map(([s, x, y]) => {
      const [px, py] = at(s, x, y);
      return (
        <g key={px}>
          <rect x={px - 9} y={py - 7} width="18" height="13" rx="2" fill="#34305f" />
          <text x={px} y={py} fontSize="10" fontWeight="500" fill="#9a9a9a" textAnchor="middle" dominantBaseline="central">M4</text>
        </g>
      );
    })}
    {labels.map(([s, x, y, text, kind, anchor = "middle", turn = 0]) => {
      const [px, py] = at(s, x, y);
      const k = kinds[kind];
      return (
        <text
          key={`${px}-${py}`} x={px} y={py} textAnchor={anchor} dominantBaseline="central"
          fontSize={k.size} fontWeight={k.weight} fontStyle={k.italic ? "italic" : "normal"} letterSpacing={k.spacing || 0}
          fill={k.fill} stroke={kind === "water" ? "none" : "#757575"} strokeWidth="2" strokeOpacity=".7" paintOrder="stroke"
          transform={turn ? `rotate(${turn} ${px} ${py})` : undefined}
        >
          {text}
        </text>
      );
    })}
    <path d="M960 297C957 286 947 284 947 273A13 13 0 0 1 973 273C973 284 963 286 960 297z" fill="#7b1710" />
    <circle cx="960" cy="273" r="5" fill="#480a08" />
    <text x="960" y="569" textAnchor="middle" fontSize="16" fontWeight="500" stroke="#c9c9c9" strokeWidth="2" paintOrder="stroke">
      <tspan fill="#4285f4">G</tspan><tspan fill="#ea4335">o</tspan><tspan fill="#fbbc05">o</tspan><tspan fill="#4285f4">g</tspan><tspan fill="#34a853">l</tspan><tspan fill="#ea4335">e</tspan>
    </text>
  </MapDrawing>
);

/* ---------- footer ---------- */

const Footer = styled.footer`
  position: relative;
  padding: 110px 0 31px;
  background: #0b0200;
  color: #c9c9c9;
  font-size: 16px;
  line-height: 28px;
`;
const FooterGrid = styled(Container)`
  display: grid;
  grid-template-columns: 330px 330px 330px 300px;
  min-height: 338px;
`;
const FooterTitle = styled.h3`
  margin-bottom: 25px;
  font-size: 18px;
  line-height: 24px;
  font-weight: 700;
  color: #ffffff;
`;
const FooterMail = styled.a`
  display: inline-block;
  margin-top: 17px;
  border-bottom: 1px solid #c9c9c9;
  padding-bottom: 2px;
`;
const FooterPhone = styled.p`
  margin-top: 34px;
  font-size: 19px;
  font-weight: 500;
  color: #ffffff;
`;
const LinkList = styled.ul`
  display: flex;
  flex-direction: column;
  gap: 14px;
`;
const Subscribe = styled.form`
  display: flex;
  align-items: center;
  gap: 7px;
  height: 64px;
  margin-top: -9px;
  margin-bottom: 22px;
  padding-bottom: 10px;
  border-bottom: 2px solid #434855;
  color: #ffffff;
`;
const MutedIcon = styled.span`
  color: #aaaaaa;
`;
const Legal = styled(Container)`
  padding-top: 28px;
  border-top: 1px solid #373c43;
  font-size: 15px;
`;
const ToTop = styled.a`
  position: absolute;
  right: 34px;
  bottom: 34px;
  display: flex;
  align-items: center;
  justify-content: center;
  width: 42px;
  height: 42px;
  background: #edc703;
  color: #191919;
`;
const Chat = styled.div`
  position: absolute;
  left: 26px;
  bottom: 52px;
  display: flex;
  align-items: center;
  gap: 14px;
`;
const ChatButton = styled.button`
  display: flex;
  align-items: center;
  justify-content: center;
  width: 60px;
  height: 60px;
  border-radius: 28px;
  background: #4bb93c;
`;
const ChatLabel = styled.span`
  height: 42px;
  padding: 0 14px;
  border-radius: 14px;
  background: #ffffff;
  color: #1b2540;
  font: 17px/42px "Open Sans", sans-serif;
`;

export default function App() {
  return (
    <>
      <GlobalStyle />
      <Top>
        <Header>
          <Nav aria-label="Main">
            {["Home", "Pages", "Portfolio", "Blog", "Shop", "Contact"].map((name) => (
              <NavLink key={name} href={`#${name.toLowerCase()}`} $active={name === "Contact"}>{name}</NavLink>
            ))}
          </Nav>
          <Logo href="#home">W&amp;D</Logo>
          <Tools>
            <ToolButton aria-label="Cart"><BagIcon /><Badge>0</Badge></ToolButton>
            <ToolButton aria-label="Search"><SearchIcon /></ToolButton>
            <ToolButton aria-label="Menu"><GridIcon /></ToolButton>
          </Tools>
        </Header>
        <PageTitle>Contact</PageTitle>
        <Down><ChevronIcon /></Down>
        <Columns>
          <div>
            <Eyebrow>CONTACT US</Eyebrow>
            <Heading>Have Questions?<br />Get in Touch!</Heading>
            <Lead>Adipiscing elit, sed do eiusmod tempor incididunt ut labore et dolore magna aliqua. Ut enim ad minim.</Lead>
            <ContactList>
              <ContactItem><PinIcon />785 15h Street, Office 478 Boston</ContactItem>
              <ContactItem $strong><MobileIcon /><a href="tel:+18005552569">+1 800 555 25 69</a></ContactItem>
              <ContactItem><MailIcon /><a href="mailto:info@email.com">info@email.com</a></ContactItem>
            </ContactList>
          </div>
          <Form>
            <Field><UserIcon /><TextInput aria-label="Name" placeholder="Name" /></Field>
            <Field><MailIcon /><TextInput aria-label="Email Address" placeholder="Email Address" type="email" /></Field>
            <Field><PhoneIcon /><TextInput aria-label="Phone" placeholder="Phone" type="tel" /></Field>
            <Field><InfoIcon /><TextInput aria-label="Subject" placeholder="Subject" /></Field>
            <Field $wide><PencilIcon /><TextArea aria-label="Message" placeholder="How can we help you? Feel free to get in touch!" /></Field>
            <Submit>
              <SubmitButton type="button"><PlaneIcon />Get in Touch</SubmitButton>
              <Agree><Check /><span>I agree that my data is <a href="#privacy">collected and stored</a>.</span></Agree>
            </Submit>
          </Form>
        </Columns>
        <SideStack top="363px" />
        <Helpers>
          <Reader aria-label="Reader"><BookIcon /></Reader>
          <Assistant aria-label="Assistant"><BrainIcon /></Assistant>
        </Helpers>
      </Top>

      <MapSection>
        <LondonMap />
        <MapHint>Use ctrl + scroll to zoom the map</MapHint>
        <MapCard>
          <div>
            <CardTitle>51°30'12.0"N 0°07'10.4"W</CardTitle>
            <CardAddress>GV3J+85G London, United Kingdom</CardAddress>
            <a href="#larger">View larger map</a>
          </div>
          <Directions href="#directions">
            <svg width="22" height="22" viewBox="0 0 22 22" aria-hidden="true">
              <path d="M3 3l7 7" stroke="#a9c7f8" strokeWidth="4" />
              <path d="M11 21v-6c0-4 3-5 6-9" fill="none" stroke="#5b93ea" strokeWidth="4" />
              <path d="M12 2h8v8z" fill="#4a86e8" />
            </svg>
            Directions
          </Directions>
        </MapCard>
        <Satellite aria-label="Satellite view">
          <svg width="38" height="38" viewBox="0 0 38 38" aria-hidden="true">
            <rect width="38" height="38" fill="#56564a" />
            <path d="M0 8l12 4 8-10M6 38l4-16 14-4 14 8M24 18l3-18M10 22L0 26M24 18l-2 20" stroke="#65645a" fill="none" />
            <path d="M0 28h9v10H0zM28 2h8v9h-8zM14 24h7v9h-7z" fill="#474f41" />
          </svg>
        </Satellite>
        <Zoom>
          <ZoomButton aria-label="Zoom in"><Stroke size={20} w={2.6}><path d="M12 3v18M3 12h18" /></Stroke></ZoomButton>
          <ZoomButton aria-label="Zoom out"><Stroke size={20} w={2.6}><path d="M3 12h18" /></Stroke></ZoomButton>
        </Zoom>
        <Credits>
          <Credit href="#keys">Keyboard shortcuts</Credit>
          <CreditText>Map data ©2025 Google</CreditText>
          <Credit href="#terms">Terms</Credit>
          <Credit href="#report">Report a map error</Credit>
        </Credits>
        <SideStack top="75px" />
      </MapSection>

      <Footer>
        <FooterGrid>
          <div><Logo href="#home" $light>W&amp;D</Logo></div>
          <div>
            <FooterTitle>Office</FooterTitle>
            <p>The USA —<br />785 15h Street, Office 478<br />Boston MA, 02116</p>
            <FooterMail href="mailto:info@email.com">info@email.com</FooterMail>
            <FooterPhone><a href="tel:+18005552569">+1 800 555 25 69</a></FooterPhone>
          </div>
          <div>
            <FooterTitle>Links</FooterTitle>
            <LinkList>
              {["Home", "Services", "About Us", "Shop", "Contact"].map((name) => (
                <li key={name}><a href={`#${name}`}>{name}</a></li>
              ))}
            </LinkList>
          </div>
          <div>
            <FooterTitle>Newsletter</FooterTitle>
            <Subscribe>
              <MutedIcon><MailIcon size={20} /></MutedIcon>
              <TextInput $light aria-label="Enter Your Email Address" placeholder="Enter Your Email Address" type="email" />
              <button type="button" aria-label="Subscribe"><ArrowIcon /></button>
            </Subscribe>
            <Agree $light><Check $light /><span>I agree to the <a href="#privacy">Privacy Policy</a>.</span></Agree>
          </div>
        </FooterGrid>
        <Legal>AncoraThemes © 2025. All Rights Reserved.</Legal>
        <SideStack top="32px" clip />
        <Chat>
          <ChatButton aria-label="Open chat">
            <svg width="20" height="20" viewBox="0 0 20 20" aria-hidden="true"><path d="M2 0h16a2 2 0 0 1 2 2v12a2 2 0 0 1-2 2H4l-4 4V2a2 2 0 0 1 2-2z" fill="#ffffff" /></svg>
          </ChatButton>
          <ChatLabel>Presale Chat</ChatLabel>
        </Chat>
        <ToTop href="#top" aria-label="Back to top"><ArrowIcon up /></ToTop>
      </Footer>
    </>
  );
}
